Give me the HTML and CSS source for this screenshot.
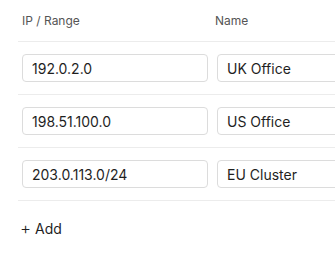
FILE: index.html
```html
<!DOCTYPE html>
<html lang="en">
<head>
  <meta charset="UTF-8">
  <meta name="viewport" content="width=device-width, initial-scale=1.0">
  <title>IP allowlist</title>
  <link rel="stylesheet" href="styles.css">
</head>
<body>
  <div class="list">
    <div class="row head">
      <div class="cell">IP / Range</div>
      <div class="cell">Name</div>
    </div>
    <div class="row">
      <div class="cell"><input class="field" type="text" value="192.0.2.0"></div>
      <div class="cell"><input class="field" type="text" value="UK Office"></div>
    </div>
    <div class="row">
      <div class="cell"><input class="field" type="text" value="198.51.100.0"></div>
      <div class="cell"><input class="field" type="text" value="US Office"></div>
    </div>
    <div class="row">
      <div class="cell"><input class="field" type="text" value="203.0.113.0/24"></div>
      <div class="cell"><input class="field" type="text" value="EU Cluster"></div>
    </div>
    <button class="add" type="button"><span class="plus">+</span> Add</button>
  </div>
</body>
</html>
```

FILE: styles.css
```css
* {
  margin: 0;
  padding: 0;
  box-sizing: border-box;
}

html, body {
  overflow: hidden;
}

body {
  font-family: Inter, "Liberation Sans", sans-serif;
  color: #1f1f1f;
  background: #fff;
}

.list {
  padding-left: 18px;
}

.row {
  display: grid;
  grid-template-columns: 195px 1fr;
  align-items: center;
  height: 53px;
  margin-right: -80px;
  border-bottom: 1px solid #ececec;
}

.row.head {
  height: 42px;
  font-size: 12px;
  color: #555;
}

.cell {
  padding: 0 4px;
}

.row.head .cell + .cell {
  padding-left: 2px;
}

.field {
  display: block;
  width: 186px;
  height: 28px;
  padding: 0 9px;
  border: 1px solid #dcdcdc;
  border-radius: 4px;
  font-family: inherit;
  font-size: 14px;
  color: #1f1f1f;
  background: #fff;
  outline: none;
}

.add {
  display: flex;
  align-items: center;
  gap: 4px;
  margin-top: 17px;
  padding: 0 2px;
  height: 20px;
  border: 0;
  background: none;
  font-family: inherit;
  font-size: 14px;
  color: #1f1f1f;
  cursor: pointer;
}

.plus {
  font-size: 17px;
  font-weight: 300;
  line-height: 1;
}
```
